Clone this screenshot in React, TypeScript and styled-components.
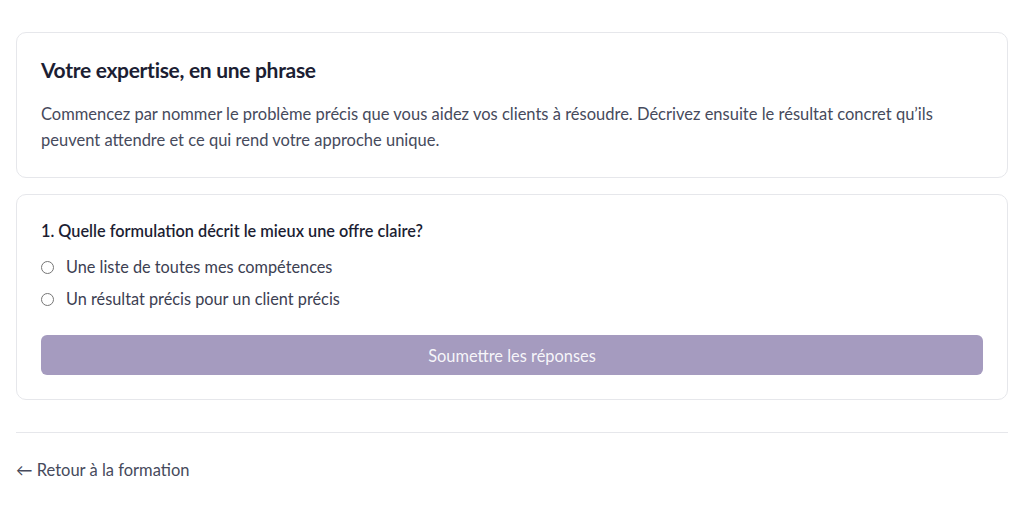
import styled, { createGlobalStyle } from "styled-components";

const GlobalStyle = createGlobalStyle`
    body {
        margin: 0;
        background: #ffffff;
        font-family: Lato, "Noto Sans", sans-serif;
        color: #1c1e33;
    }
`

const Page = styled.main`
    padding: 32px 16px 24px;
    display: flex;
    flex-direction: column;
    gap: 16px;
`

const Card = styled.section`
    border: 1px solid #e6e7eb;
    border-radius: 10px;
    padding: 24px;
    background: #ffffff;
`

const Title = styled.h2`
    margin: 0 0 18px;
    font-size: 21px;
    line-height: 26px;
    font-weight: 700;
    letter-spacing: -0.3px;
    color: #1c1e33;
`

const Intro = styled.p`
    margin: 0;
    font-size: 16.5px;
    line-height: 26px;
    color: #464a5c;
`

const Question = styled.fieldset`
    margin: 0;
    padding: 0;
    border: none;
    display: flex;
    flex-direction: column;
    gap: 8px;
`

const Legend = styled.legend`
    padding: 0;
    margin-bottom: 12px;
    font-size: 16.3px;
    line-height: 24px;
    font-weight: 600;
    color: #1c1e33;
`

const Option = styled.label`
    display: flex;
    align-items: center;
    gap: 12px;
    font-size: 16.3px;
    line-height: 24px;
    color: #3c4052;
    cursor: pointer;

    input {
        margin: 0;
        width: 13px;
        height: 13px;
    }
`

const SubmitButton = styled.button`
    margin-top: 24px;
    width: 100%;
    height: 40px;
    border: none;
    border-radius: 6px;
    background: #a59bbf;
    color: rgba(255, 255, 255, 0.92);
    font-family: inherit;
    font-size: 16.4px;
    cursor: not-allowed;
`

const Footer = styled.footer`
    margin-top: 16px;
    border-top: 1px solid #e6e7eb;
    padding-top: 24px;
`

const BackLink = styled.a`
    font-size: 16.5px;
    line-height: 26px;
    color: #464a5c;
    text-decoration: none;
`

const options = [
    "Une liste de toutes mes compétences",
    "Un résultat précis pour un client précis",
]

export default function App() {
    return <>
        <GlobalStyle />
        <Page>
            <Card>
                <Title>Votre expertise, en une phrase</Title>
                <Intro>
                    Commencez par nommer le problème précis que vous aidez vos clients à résoudre.
                    Décrivez ensuite le résultat concret qu’ils peuvent attendre et ce qui rend votre approche unique.
                </Intro>
            </Card>
            <Card>
                <Question>
                    <Legend>1. Quelle formulation décrit le mieux une offre claire?</Legend>
                    {options.map(o => (
                        <Option key={o}>
                            <input type="radio" name="q1" value={o} />
                            {o}
                        </Option>
                    ))}
                </Question>
                <SubmitButton disabled>Soumettre les réponses</SubmitButton>
            </Card>
            <Footer>
                <BackLink href="#">← Retour à la formation</BackLink>
            </Footer>
        </Page>
    </>
}
